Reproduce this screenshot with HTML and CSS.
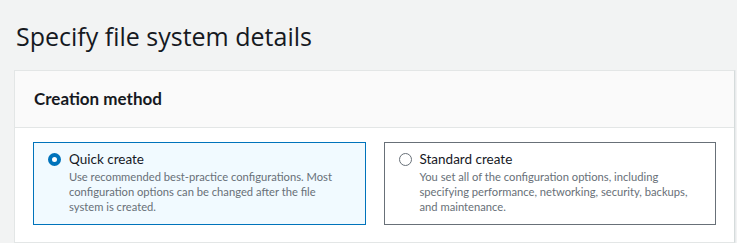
FILE: index.html
```html
<!DOCTYPE html>
<html>

	<head>
		<meta charset="UTF-8">
		<title>Specify file system details</title>
		<link rel="stylesheet" href="styles.css">
	</head>

	<body>
		<h1 class="page-title">Specify file system details</h1>

		<div class="panel">
			<div class="panel-head">
				<h2>Creation method</h2>
			</div>
			<div class="panel-body">
				<label class="tile selected">
					<span class="radio on"></span>
					<span class="tile-text">
						<span class="tile-label">Quick create</span>
						<span class="tile-desc">Use recommended best-practice configurations. Most configuration options can be changed after the file system is created.</span>
					</span>
				</label>
				<label class="tile">
					<span class="radio"></span>
					<span class="tile-text">
						<span class="tile-label">Standard create</span>
						<span class="tile-desc">You set all of the configuration options, including specifying performance, networking, security, backups, and maintenance.</span>
					</span>
				</label>
			</div>
		</div>
	</body>

</html>
```

FILE: styles.css
```css
* {
	margin: 0;
	padding: 0;
	box-sizing: border-box;
}

body {
	background-color: #f2f3f3;
	font-family: Lato, "Open Sans", sans-serif;
	color: #16191f;
	padding: 0 2px 0 14px;
}

.page-title {
	font-family: "Open Sans", sans-serif;
	font-size: 25px;
	font-weight: 400;
	line-height: 34px;
	padding: 19px 0 17px 2px;
	color: #16191f;
}

.panel {
	background-color: #fff;
	border: 1px solid #e3e6e6;
	border-right-color: #d5dbdb;
	box-shadow: 1px 0 0 #e9ebed;
}

.panel-head {
	background-color: #fafafa;
	border-bottom: 1px solid #e3e6e6;
	height: 57px;
	padding: 0 19px;
	display: flex;
	align-items: center;
}

.panel-head h2 {
	font-size: 17px;
	font-weight: 700;
	line-height: 22px;
}

.panel-body {
	display: grid;
	grid-template-columns: 1fr 1fr;
	gap: 18px;
	padding: 14px 18px 17px;
}

.tile {
	display: flex;
	gap: 8px;
	border: 1px solid #687078;
	padding: 6px 14px 10px 14px;
	min-height: 83px;
}

.tile.selected {
	background-color: #f1faff;
	border-color: #0073bb;
}

.radio {
	flex: none;
	width: 13px;
	height: 13px;
	border-radius: 50%;
	border: 1.5px solid #687078;
	margin-top: 4px;
	background-color: #fff;
}

.radio.on {
	border: 4px solid #0073bb;
}

.tile-text {
	display: flex;
	flex-direction: column;
}

.tile-label {
	font-size: 13.5px;
	line-height: 20px;
}

.tile-desc {
	font-size: 11.2px;
	line-height: 15px;
	color: #687078;
}
```
